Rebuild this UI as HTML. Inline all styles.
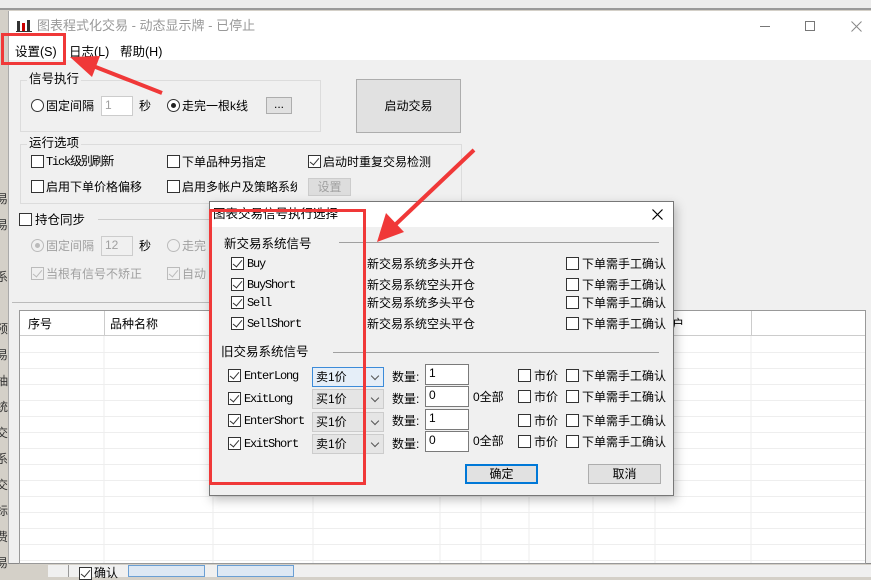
<!DOCTYPE html>
<html><head><meta charset="utf-8"><style>
*{margin:0;padding:0;box-sizing:border-box}
body{width:871px;height:577px;overflow:hidden;position:relative;background:#d4d0c8;font-family:"Liberation Sans","Noto Sans CJK SC",sans-serif;font-size:12px;color:#000}
.a{position:absolute;white-space:nowrap;line-height:14px}
.cb{position:absolute;width:13px;height:13px;border:1px solid #333;background:#fff}
.cb.k::after{content:"";position:absolute;left:3px;top:0px;width:4px;height:8px;border:solid #333;border-width:0 1.5px 1.5px 0;transform:rotate(40deg)}
.cb.d{border-color:#bbb;background:#f0f0f0}.cb.d::after{border-color:#bbb}
.rd{position:absolute;width:13px;height:13px;border:1px solid #333;border-radius:50%;background:#fff}
.rd.on::after{content:"";position:absolute;left:3px;top:3px;width:5px;height:5px;border-radius:50%;background:#222}
.rd.d{border-color:#bbb;background:#f0f0f0}.rd.d.on::after{background:#bbb}
.in{position:absolute;background:#fff;border:1px solid #7a7a7a;padding-left:3px;line-height:17px}
.btn{position:absolute;background:#e1e1e1;border:1px solid #adadad;text-align:center}
.grp{position:absolute;border:1px solid #dcdcdc}
.mono{font-family:"Liberation Mono","Noto Sans CJK SC",monospace;font-size:12px;letter-spacing:-1.2px}
.gr{color:#a0a0a0}
.hl{position:absolute;height:1px;background:#a0a0a0}
.combo{position:absolute;background:#e5e5e5;border:1px solid #ccc;padding-left:3px;line-height:18px}
.combo::after{content:"";position:absolute;right:5px;top:5px;width:5px;height:5px;border:solid #555;border-width:0 1px 1px 0;transform:rotate(45deg)}
</style></head><body>
<div class="a" style="left:0;top:0;width:871px;height:10px;background:#ececec"></div>
<div class="a" style="left:0;top:8px;width:871px;height:2px;background:#999"></div>
<div class="a" style="left:-4px;top:186px;color:#333;line-height:26px">易<br>易<br><br>系<br><br>预<br>易<br>抽<br>统<br>交<br>系<br>交<br>标<br>费<br>易</div>
<div class="a" style="left:8px;top:11px;width:863px;height:553px;background:#f0f0f0;border-left:1px solid #aaa;border-bottom:1px solid #888"></div>
<div class="a" style="left:9px;top:11px;width:862px;height:49px;background:#fff"></div>
<svg class="a" style="left:16px;top:19px" width="16" height="14"><rect x="1" y="2" width="3" height="10" fill="#333"/><rect x="6" y="4" width="3" height="8" fill="#c00"/><rect x="11" y="1" width="3" height="11" fill="#333"/><rect x="0" y="12" width="16" height="1" fill="#333"/></svg>
<div class="a" style="left:37px;top:19px;color:#999;font-size:13px">图表程式化交易 - 动态显示牌 - 已停止</div>
<div class="a" style="left:760px;top:26px;width:10px;height:1px;background:#777"></div>
<div class="a" style="left:805px;top:21px;width:10px;height:10px;border:1px solid #777"></div>
<svg class="a" style="left:851px;top:21px" width="11" height="11"><path d="M0.5 0.5L10.5 10.5M10.5 0.5L0.5 10.5" stroke="#888" stroke-width="1"/></svg>
<div class="a" style="left:15px;top:45px;font-size:12.5px">设置(S)</div>
<div class="a" style="left:69px;top:45px;font-size:12.5px">日志(L)</div>
<div class="a" style="left:120px;top:45px;font-size:12.5px">帮助(H)</div>
<div class="a" style="left:1px;top:33px;width:65px;height:32px;border:3px solid #f03838"></div>
<div class="grp" style="left:20px;top:80px;width:301px;height:52px"></div>
<div class="a" style="left:27px;top:72px;background:#f0f0f0;padding:0 2px;font-size:12.5px">信号执行</div>
<div class="rd" style="left:31px;top:99px"></div><div class="a" style="left:46px;top:99px">固定间隔</div>
<div class="in gr" style="left:101px;top:96px;width:32px;height:20px;border-color:#ccc">1</div>
<div class="a" style="left:139px;top:99px">秒</div>
<div class="rd on" style="left:167px;top:99px"></div><div class="a" style="left:182px;top:99px">走完一根k线</div>
<div class="btn" style="left:266px;top:97px;width:26px;height:17px;line-height:12px">...</div>
<div class="btn" style="left:356px;top:79px;width:105px;height:54px;line-height:52px">启动交易</div>
<div class="grp" style="left:20px;top:144px;width:442px;height:60px"></div>
<div class="a" style="left:27px;top:136px;background:#f0f0f0;padding:0 2px;font-size:12.5px">运行选项</div>
<div class="cb" style="left:31px;top:155px"></div><div class="a mono" style="left:46px;top:155px">Tick级别刷新</div>
<div class="cb" style="left:167px;top:155px"></div><div class="a" style="left:182px;top:155px">下单品种另指定</div>
<div class="cb k" style="left:308px;top:155px"></div><div class="a" style="left:323px;top:155px">启动时重复交易检测</div>
<div class="cb" style="left:31px;top:180px"></div><div class="a" style="left:46px;top:180px">启用下单价格偏移</div>
<div class="cb" style="left:167px;top:180px"></div><div class="a" style="left:182px;top:180px;width:115px;overflow:hidden">启用多帐户及策略系统</div>
<div class="btn gr" style="left:308px;top:178px;width:43px;height:18px;line-height:16px;border-color:#ccc;background:#ddd">设置</div>
<div class="cb" style="left:19px;top:213px"></div><div class="a" style="left:35px;top:213px;font-size:12.5px">持仓同步</div>
<div class="hl" style="left:98px;top:219px;width:120px;background:#ccc"></div>
<div class="rd d on" style="left:31px;top:239px"></div><div class="a gr" style="left:46px;top:239px">固定间隔</div>
<div class="in gr" style="left:101px;top:236px;width:32px;height:20px;border-color:#ccc;background:#f0f0f0">12</div>
<div class="a" style="left:139px;top:239px">秒</div>
<div class="rd d" style="left:167px;top:239px"></div><div class="a gr" style="left:182px;top:239px">走完</div>
<div class="cb d k" style="left:31px;top:267px"></div><div class="a gr" style="left:46px;top:267px">当根有信号不矫正</div>
<div class="cb d k" style="left:167px;top:267px"></div><div class="a gr" style="left:182px;top:267px">自动</div>
<div class="hl" style="left:12px;top:302px;width:200px;background:#bbb"></div>
<div class="a" style="left:19px;top:310px;width:847px;height:254px;background:#fff;border:1px solid #999;overflow:hidden">
<div class="a" style="left:0;top:0;width:847px;height:25px;border-bottom:1px solid #ccc"></div>
<div class="a" style="left:8px;top:6px">序号</div><div class="a" style="left:90px;top:6px">品种名称</div><div class="a" style="left:652px;top:6px">户</div>
<div class="a" style="left:84px;top:0;width:1px;height:25px;background:#ccc"></div>
<div class="a" style="left:731px;top:0;width:1px;height:25px;background:#ccc"></div>
<svg class="a" style="left:0;top:25px" width="847" height="230">
<g stroke="#eee"><line x1="84" y1="0" x2="84" y2="230"/><line x1="193" y1="0" x2="193" y2="230"/><line x1="293" y1="0" x2="293" y2="230"/><line x1="420" y1="0" x2="420" y2="230"/><line x1="461" y1="0" x2="461" y2="230"/><line x1="509" y1="0" x2="509" y2="230"/><line x1="573" y1="0" x2="573" y2="230"/><line x1="635" y1="0" x2="635" y2="230"/><line x1="731" y1="0" x2="731" y2="230"/>
<line x1="0" y1="16.5" x2="847" y2="16.5"/><line x1="0" y1="32.5" x2="847" y2="32.5"/><line x1="0" y1="48.5" x2="847" y2="48.5"/><line x1="0" y1="64.5" x2="847" y2="64.5"/><line x1="0" y1="80.5" x2="847" y2="80.5"/><line x1="0" y1="96.5" x2="847" y2="96.5"/><line x1="0" y1="112.5" x2="847" y2="112.5"/><line x1="0" y1="128.5" x2="847" y2="128.5"/><line x1="0" y1="144.5" x2="847" y2="144.5"/><line x1="0" y1="160.5" x2="847" y2="160.5"/><line x1="0" y1="176.5" x2="847" y2="176.5"/><line x1="0" y1="192.5" x2="847" y2="192.5"/><line x1="0" y1="208.5" x2="847" y2="208.5"/><line x1="0" y1="224.5" x2="847" y2="224.5"/></g></svg>
</div>
<div class="a" style="left:48px;top:565px;width:823px;height:12px;background:#f0f0f0"></div>
<div class="a" style="left:68px;top:565px;width:1px;height:12px;background:#999"></div>
<div class="cb k" style="left:79px;top:567px"></div><div class="a" style="left:94px;top:566px">确认</div>
<div class="a" style="left:128px;top:565px;width:77px;height:12px;background:#dde8f4;border:1px solid #6a9fd4"></div>
<div class="a" style="left:217px;top:565px;width:77px;height:12px;background:#dde8f4;border:1px solid #6a9fd4"></div>
<div class="a" style="left:209px;top:201px;width:465px;height:295px;background:#f0f0f0;border:1px solid #777;box-shadow:2px 4px 10px rgba(0,0,0,.25)"></div>
<div class="a" style="left:210px;top:202px;width:463px;height:25px;background:#fff"></div>
<div class="a" style="left:213px;top:207px;font-size:12.5px">图表交易信号执行选择</div>
<svg class="a" style="left:652px;top:209px" width="11" height="11"><path d="M0.5 0.5L10.5 10.5M10.5 0.5L0.5 10.5" stroke="#000" stroke-width="1.2"/></svg>
<div class="a" style="left:224px;top:237px;font-size:12.5px">新交易系统信号</div>
<div class="hl" style="left:339px;top:242px;width:320px"></div>
<div class="cb k" style="left:231px;top:257px"></div><div class="a mono" style="left:247px;top:257px">Buy</div>
<div class="cb k" style="left:231px;top:278px"></div><div class="a mono" style="left:247px;top:278px">BuyShort</div>
<div class="cb k" style="left:231px;top:296px"></div><div class="a mono" style="left:247px;top:296px">Sell</div>
<div class="cb k" style="left:231px;top:317px"></div><div class="a mono" style="left:247px;top:317px">SellShort</div>
<div class="a" style="left:367px;top:257px">新交易系统多头开仓</div>
<div class="a" style="left:367px;top:278px">新交易系统空头开仓</div>
<div class="a" style="left:367px;top:296px">新交易系统多头平仓</div>
<div class="a" style="left:367px;top:317px">新交易系统空头平仓</div>
<div class="cb" style="left:566px;top:257px"></div><div class="a" style="left:582px;top:257px">下单需手工确认</div>
<div class="cb" style="left:566px;top:278px"></div><div class="a" style="left:582px;top:278px">下单需手工确认</div>
<div class="cb" style="left:566px;top:296px"></div><div class="a" style="left:582px;top:296px">下单需手工确认</div>
<div class="cb" style="left:566px;top:317px"></div><div class="a" style="left:582px;top:317px">下单需手工确认</div>
<div class="a" style="left:221px;top:345px;font-size:12.5px">旧交易系统信号</div>
<div class="hl" style="left:333px;top:352px;width:326px"></div>
<div class="cb k" style="left:228px;top:369px"></div><div class="a mono" style="left:244px;top:369px">EnterLong</div>
<div class="cb k" style="left:228px;top:392px"></div><div class="a mono" style="left:244px;top:392px">ExitLong</div>
<div class="cb k" style="left:228px;top:414px"></div><div class="a mono" style="left:244px;top:414px">EnterShort</div>
<div class="cb k" style="left:228px;top:437px"></div><div class="a mono" style="left:244px;top:437px">ExitShort</div>
<div class="combo" style="left:312px;top:367px;width:72px;height:20px;border-color:#3c8bd9;background:#e5eef8">卖1价</div>
<div class="combo" style="left:312px;top:389px;width:72px;height:20px">买1价</div>
<div class="combo" style="left:312px;top:412px;width:72px;height:20px">买1价</div>
<div class="combo" style="left:312px;top:434px;width:72px;height:20px">卖1价</div>
<div class="a" style="left:392px;top:370px">数量:</div><div class="a" style="left:392px;top:392px">数量:</div><div class="a" style="left:392px;top:414px">数量:</div><div class="a" style="left:392px;top:437px">数量:</div>
<div class="in" style="left:425px;top:364px;width:44px;height:21px">1</div>
<div class="in" style="left:425px;top:386px;width:44px;height:21px">0</div>
<div class="in" style="left:425px;top:409px;width:44px;height:21px">1</div>
<div class="in" style="left:425px;top:431px;width:44px;height:21px">0</div>
<div class="a" style="left:473px;top:390px">0全部</div><div class="a" style="left:473px;top:434px">0全部</div>
<div class="cb" style="left:518px;top:369px"></div><div class="a" style="left:534px;top:369px">市价</div>
<div class="cb" style="left:518px;top:390px"></div><div class="a" style="left:534px;top:390px">市价</div>
<div class="cb" style="left:518px;top:414px"></div><div class="a" style="left:534px;top:414px">市价</div>
<div class="cb" style="left:518px;top:435px"></div><div class="a" style="left:534px;top:435px">市价</div>
<div class="cb" style="left:566px;top:369px"></div><div class="a" style="left:582px;top:369px">下单需手工确认</div>
<div class="cb" style="left:566px;top:390px"></div><div class="a" style="left:582px;top:390px">下单需手工确认</div>
<div class="cb" style="left:566px;top:414px"></div><div class="a" style="left:582px;top:414px">下单需手工确认</div>
<div class="cb" style="left:566px;top:435px"></div><div class="a" style="left:582px;top:435px">下单需手工确认</div>
<div class="btn" style="left:465px;top:464px;width:73px;height:20px;line-height:16px;border:2px solid #0078d7">确定</div>
<div class="btn" style="left:588px;top:464px;width:73px;height:20px;line-height:18px">取消</div>
<div class="a" style="left:209px;top:209px;width:157px;height:276px;border:3px solid #f03838"></div>
<svg class="a" style="left:0;top:0" width="871" height="577">
<line x1="162" y1="93" x2="88" y2="64" stroke="#f03838" stroke-width="4"/>
<polygon points="70,57 100,56 92,77" fill="#f03838"/>
<line x1="474" y1="150" x2="395" y2="225" stroke="#f03838" stroke-width="4"/>
<polygon points="377,242 386,213 404,232" fill="#f03838"/>
</svg>
</body></html>
